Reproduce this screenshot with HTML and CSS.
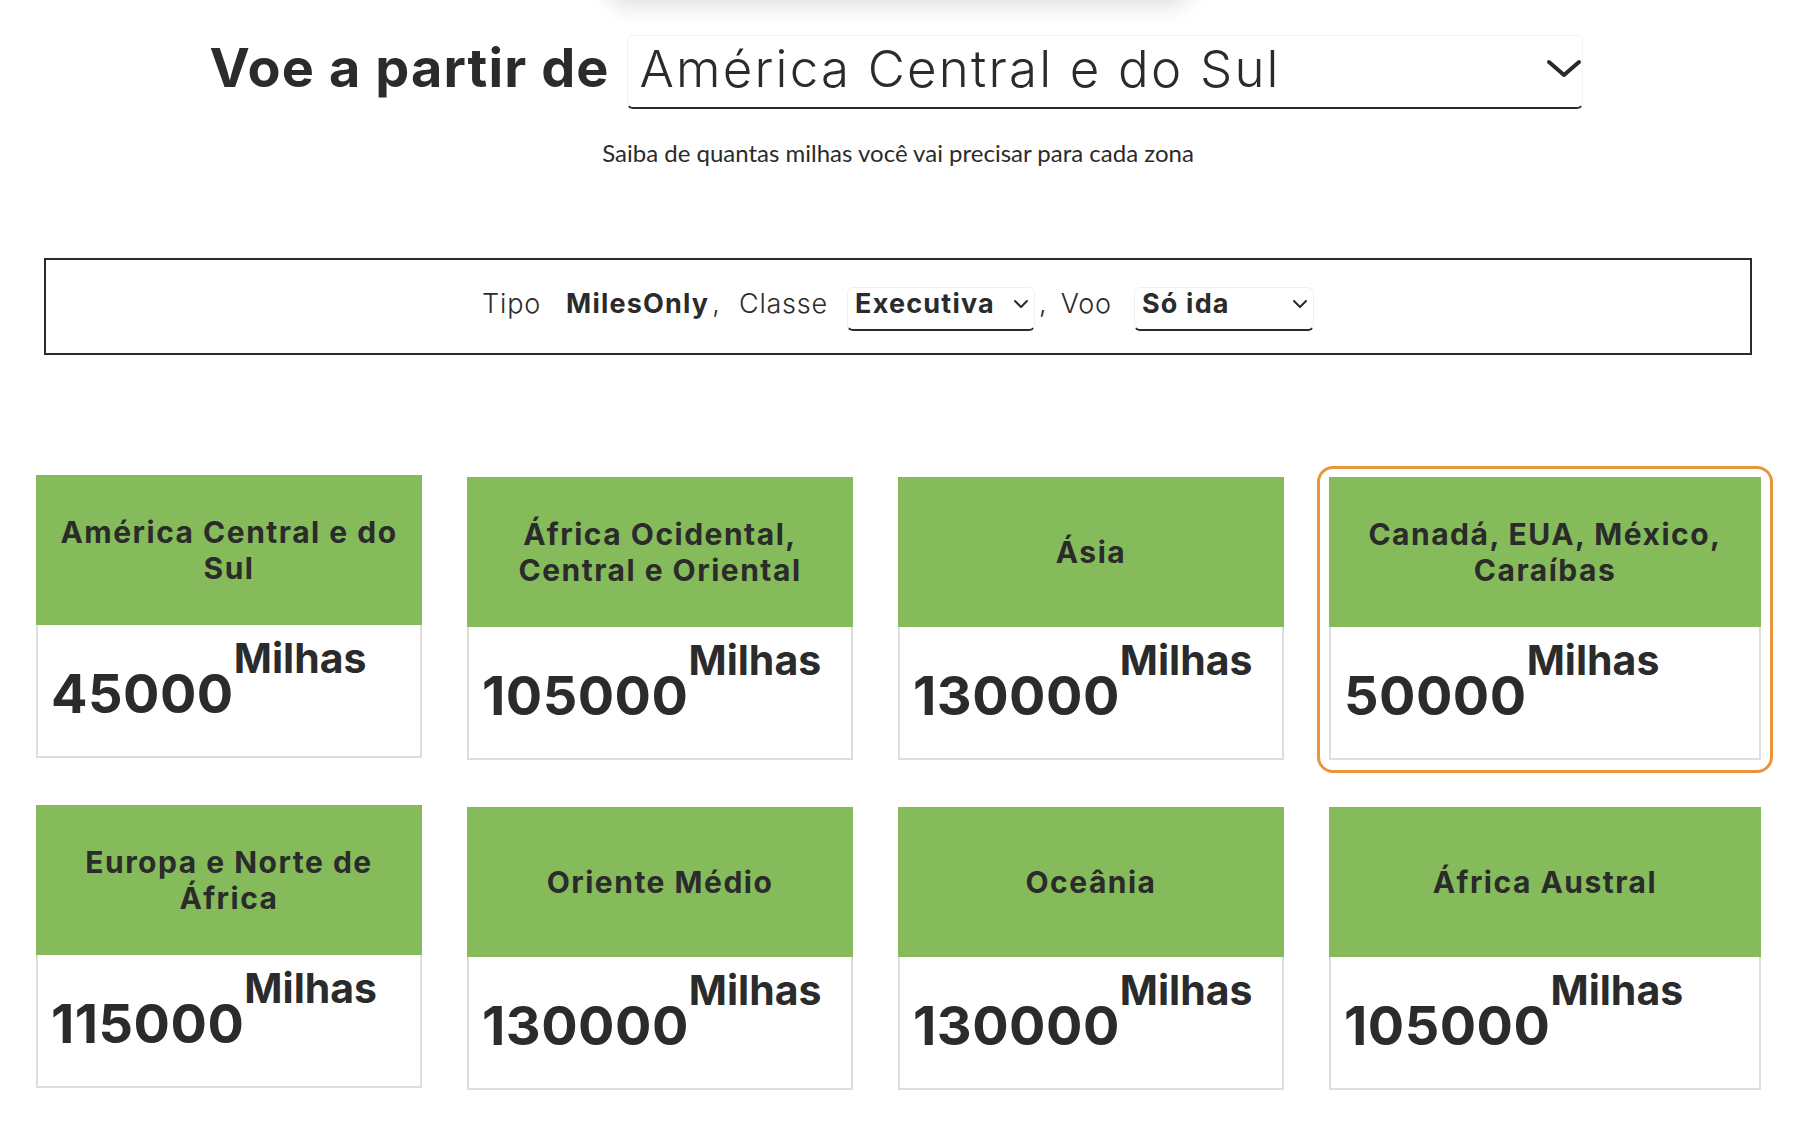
FILE: index.html
```html
<!DOCTYPE html>
<html lang="pt-BR">
<head>
    <meta charset="UTF-8">
    <meta name="viewport" content="width=device-width, initial-scale=1.0">
    <title>Tabela de Milhas</title>
    <link rel="stylesheet" href="styles.css">
</head>
<body>
    <div class="top-shadow"></div>

    <div class="origin-row">
        <h1 class="origin-title">Voe a partir de</h1>
        <div class="origin-select">
            <span>América Central e do Sul</span>
            <svg class="chevron-big" width="36" height="20" viewBox="0 0 36 20">
                <path d="M3 3 L18 16 L33 3" fill="none" stroke="#2b2b2b" stroke-width="4" stroke-linecap="round" stroke-linejoin="round"/>
            </svg>
        </div>
    </div>
    <p class="origin-hint">Saiba de quantas milhas você vai precisar para cada zona</p>

    <div class="filter-bar">
        <span class="filter-label">Tipo</span>
        <strong class="filter-value">MilesOnly</strong>
        <span class="filter-sep">,</span>
        <span class="filter-label label-class">Classe</span>
        <div class="mini-select select-class">
            <span>Executiva</span>
            <svg class="chevron-small" width="16" height="10" viewBox="0 0 16 10">
                <path d="M2 2 L8 8 L14 2" fill="none" stroke="#2b2b2b" stroke-width="2" stroke-linecap="round" stroke-linejoin="round"/>
            </svg>
        </div>
        <span class="filter-sep sep-voo">,</span>
        <span class="filter-label label-voo">Voo</span>
        <div class="mini-select select-trip">
            <span>Só ida</span>
            <svg class="chevron-small" width="16" height="10" viewBox="0 0 16 10">
                <path d="M2 2 L8 8 L14 2" fill="none" stroke="#2b2b2b" stroke-width="2" stroke-linecap="round" stroke-linejoin="round"/>
            </svg>
        </div>
    </div>

    <div class="zone-grid">
        <div class="zone-card">
            <div class="zone-name">América Central e do Sul</div>
            <div class="zone-miles">45000<span class="miles-unit">Milhas</span></div>
        </div>
        <div class="zone-card">
            <div class="zone-name">África Ocidental, Central e Oriental</div>
            <div class="zone-miles">105000<span class="miles-unit">Milhas</span></div>
        </div>
        <div class="zone-card">
            <div class="zone-name">Ásia</div>
            <div class="zone-miles">130000<span class="miles-unit">Milhas</span></div>
        </div>
        <div class="zone-card is-selected">
            <div class="zone-name">Canadá, EUA, México, Caraíbas</div>
            <div class="zone-miles">50000<span class="miles-unit">Milhas</span></div>
        </div>
        <div class="zone-card">
            <div class="zone-name">Europa e Norte de África</div>
            <div class="zone-miles">115000<span class="miles-unit">Milhas</span></div>
        </div>
        <div class="zone-card">
            <div class="zone-name">Oriente Médio</div>
            <div class="zone-miles">130000<span class="miles-unit">Milhas</span></div>
        </div>
        <div class="zone-card">
            <div class="zone-name">Oceânia</div>
            <div class="zone-miles">130000<span class="miles-unit">Milhas</span></div>
        </div>
        <div class="zone-card">
            <div class="zone-name">África Austral</div>
            <div class="zone-miles">105000<span class="miles-unit">Milhas</span></div>
        </div>
    </div>
</body>
</html>
```

FILE: styles.css
```css
body {
    margin: 0;
    padding: 0;
    background-color: #fff;
    color: #2b2b2b;
    font-family: Inter, "Noto Sans", sans-serif;
    position: relative;
    min-height: 1128px;
}

/* sombra do menu fixo que fica acima da página */
.top-shadow {
    position: absolute;
    top: -40px;
    left: 607px;
    width: 584px;
    height: 40px;
    border-radius: 20px;
    box-shadow: 0 6px 22px rgba(0, 0, 0, 0.13);
}

.origin-row {
    display: flex;
    justify-content: center;
    align-items: baseline;
    gap: 17px;
    padding-top: 35px;
    padding-right: 4px;
}

.origin-title {
    margin: 0;
    font-size: 54px;
    line-height: 1.2;
    font-weight: 700;
    letter-spacing: 1.1px;
    color: #2b2b2b;
}

.origin-select {
    display: flex;
    align-items: baseline;
    justify-content: space-between;
    width: 956px;
    box-sizing: border-box;
    padding: 2px 0 8px 12px;
    border: 1px solid #f3f3f3;
    border-bottom: 2px solid #2b2b2b;
    border-radius: 6px;
    font-size: 51px;
    font-weight: 300;
    line-height: 1.2;
    letter-spacing: 2.2px;
    color: #2b2b2b;
}

.chevron-big {
    align-self: center;
}

.origin-hint {
    margin: 31px 0 0;
    text-align: center;
    font-family: Lato, "Liberation Sans", sans-serif;
    font-size: 24px;
    line-height: 26px;
    color: #2b2b2b;
}

.filter-bar {
    display: flex;
    justify-content: center;
    align-items: baseline;
    height: 97px;
    box-sizing: border-box;
    margin: 92px 44px 0;
    padding-top: 27px;
    border: 2px solid #2b2b2b;
    font-size: 27px;
    line-height: 1.2;
}

.filter-label {
    font-weight: 300;
    letter-spacing: 0.8px;
}

.filter-value {
    font-weight: 700;
    letter-spacing: 1.2px;
    margin-left: 25px;
}

.filter-sep {
    margin-left: 3px;
    font-weight: 300;
}

.label-class {
    margin-left: 19px;
}

.sep-voo {
    margin-left: 4px;
}

.label-voo {
    margin-left: 14px;
}

.mini-select {
    display: inline-flex;
    align-items: baseline;
    justify-content: space-between;
    box-sizing: border-box;
    padding: 0 5px 8px 7px;
    border: 1px solid #f0f0f0;
    border-bottom: 2px solid #2b2b2b;
    border-radius: 6px;
    font-weight: 700;
    letter-spacing: 1.2px;
}

.mini-select .chevron-small {
    align-self: center;
}

.select-class {
    width: 188px;
    margin-left: 19px;
}

.select-trip {
    width: 180px;
    margin-left: 22px;
}

.zone-grid {
    display: grid;
    grid-template-columns: 386px 386px 386px 432px;
    column-gap: 45px;
    row-gap: 47px;
    padding-left: 36px;
    margin-top: 122px;
}

.zone-card {
    position: relative;
    height: 283px;
}

/* a primeira coluna fica 2px acima das outras */
.zone-card:nth-child(4n+1) {
    margin-top: -2px;
    margin-bottom: 2px;
}

.zone-card.is-selected::before {
    content: '';
    position: absolute;
    top: -11px;
    left: -12px;
    right: -12px;
    bottom: -13px;
    border: 3px solid #e8963a;
    border-radius: 16px;
}

.zone-name {
    display: flex;
    align-items: center;
    justify-content: center;
    height: 150px;
    box-sizing: border-box;
    padding: 0 20px;
    background-color: #85bb5a;
    text-align: center;
    font-size: 30px;
    line-height: 36px;
    font-weight: 700;
    letter-spacing: 1.5px;
    color: #2b2b2b;
}

.zone-miles {
    height: 133px;
    box-sizing: border-box;
    padding: 13px 0 0 13px;
    border: 2px solid #dedede;
    border-top: none;
    background-color: #fff;
    font-size: 54px;
    line-height: 1;
    font-weight: 700;
    color: #2b2b2b;
    letter-spacing: 0.5px;
}

.miles-unit {
    font-size: 41px;
    vertical-align: 40px;
    letter-spacing: 0;
}
```
